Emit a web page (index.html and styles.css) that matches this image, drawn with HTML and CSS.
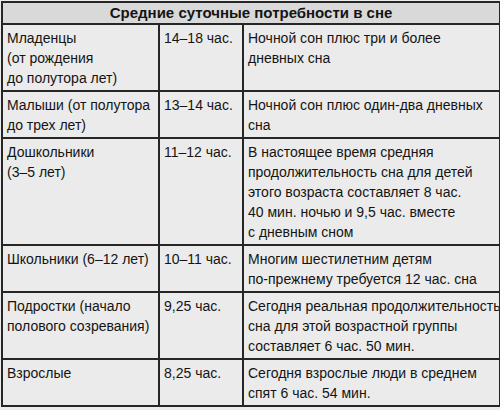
FILE: index.html
```html
<!DOCTYPE html>
<html lang="ru">
<head>
<meta charset="utf-8">
<title>Средние суточные потребности в сне</title>
<link rel="stylesheet" href="styles.css">
</head>
<body>
<div class="page">
<table class="sleep">
  <colgroup>
    <col class="c1"><col class="c2"><col class="c3">
  </colgroup>
  <thead>
    <tr><th colspan="3">Средние суточные потребности в сне</th></tr>
  </thead>
  <tbody>
    <tr class="r1">
      <td>Младенцы<br>(от рождения<br>до полутора лет)</td>
      <td>14–18 час.</td>
      <td>Ночной сон плюс три и более<br>дневных сна</td>
    </tr>
    <tr class="r2">
      <td>Малыши (от полутора<br>до трех лет)</td>
      <td>13–14 час.</td>
      <td>Ночной сон плюс один-два дневных<br>сна</td>
    </tr>
    <tr class="r3">
      <td>Дошкольники<br>(3–5 лет)</td>
      <td>11–12 час.</td>
      <td>В настоящее время средняя<br>продолжительность сна для детей<br>этого возраста составляет 8 час.<br>40 мин. ночью и 9,5 час. вместе<br>с дневным сном</td>
    </tr>
    <tr class="r4">
      <td>Школьники (6–12 лет)</td>
      <td>10–11 час.</td>
      <td>Многим шестилетним детям<br>по-прежнему требуется 12 час. сна</td>
    </tr>
    <tr class="r5">
      <td>Подростки (начало<br>полового созревания)</td>
      <td>9,25 час.</td>
      <td>Сегодня реальная продолжительность<br>сна для этой возрастной группы<br>составляет 6 час. 50 мин.</td>
    </tr>
    <tr class="r6">
      <td>Взрослые</td>
      <td>8,25 час.</td>
      <td>Сегодня взрослые люди в среднем<br>спят 6 час. 54 мин.</td>
    </tr>
  </tbody>
</table>
</div>
</body>
</html>
```
FILE: styles.css
```css
html, body {
  margin: 0;
  padding: 0;
  background: #ececec;
}
.page {
  padding: 1px 1px 0 1px;
}
.sleep {
  width: 498px;
  border-collapse: collapse;
  table-layout: fixed;
  background: #ebebeb;
  color: #141414;
  font-family: "Liberation Sans", Arial, sans-serif;
  font-size: 14px;
}
.c1 { width: 157px; }
.c2 { width: 84px; }
.c3 { width: 257px; }
.sleep th {
  background: #d9d9d9;
  border: 2px solid #262626;
  font-weight: bold;
  font-size: 15px;
  line-height: 20px;
  padding: 0;
  text-align: center;
}
.sleep td {
  border: 2px solid #262626;
  vertical-align: top;
  line-height: 20px;
  padding: 3px 3px 2px 4px;
  white-space: nowrap;
  overflow: hidden;
}
```
